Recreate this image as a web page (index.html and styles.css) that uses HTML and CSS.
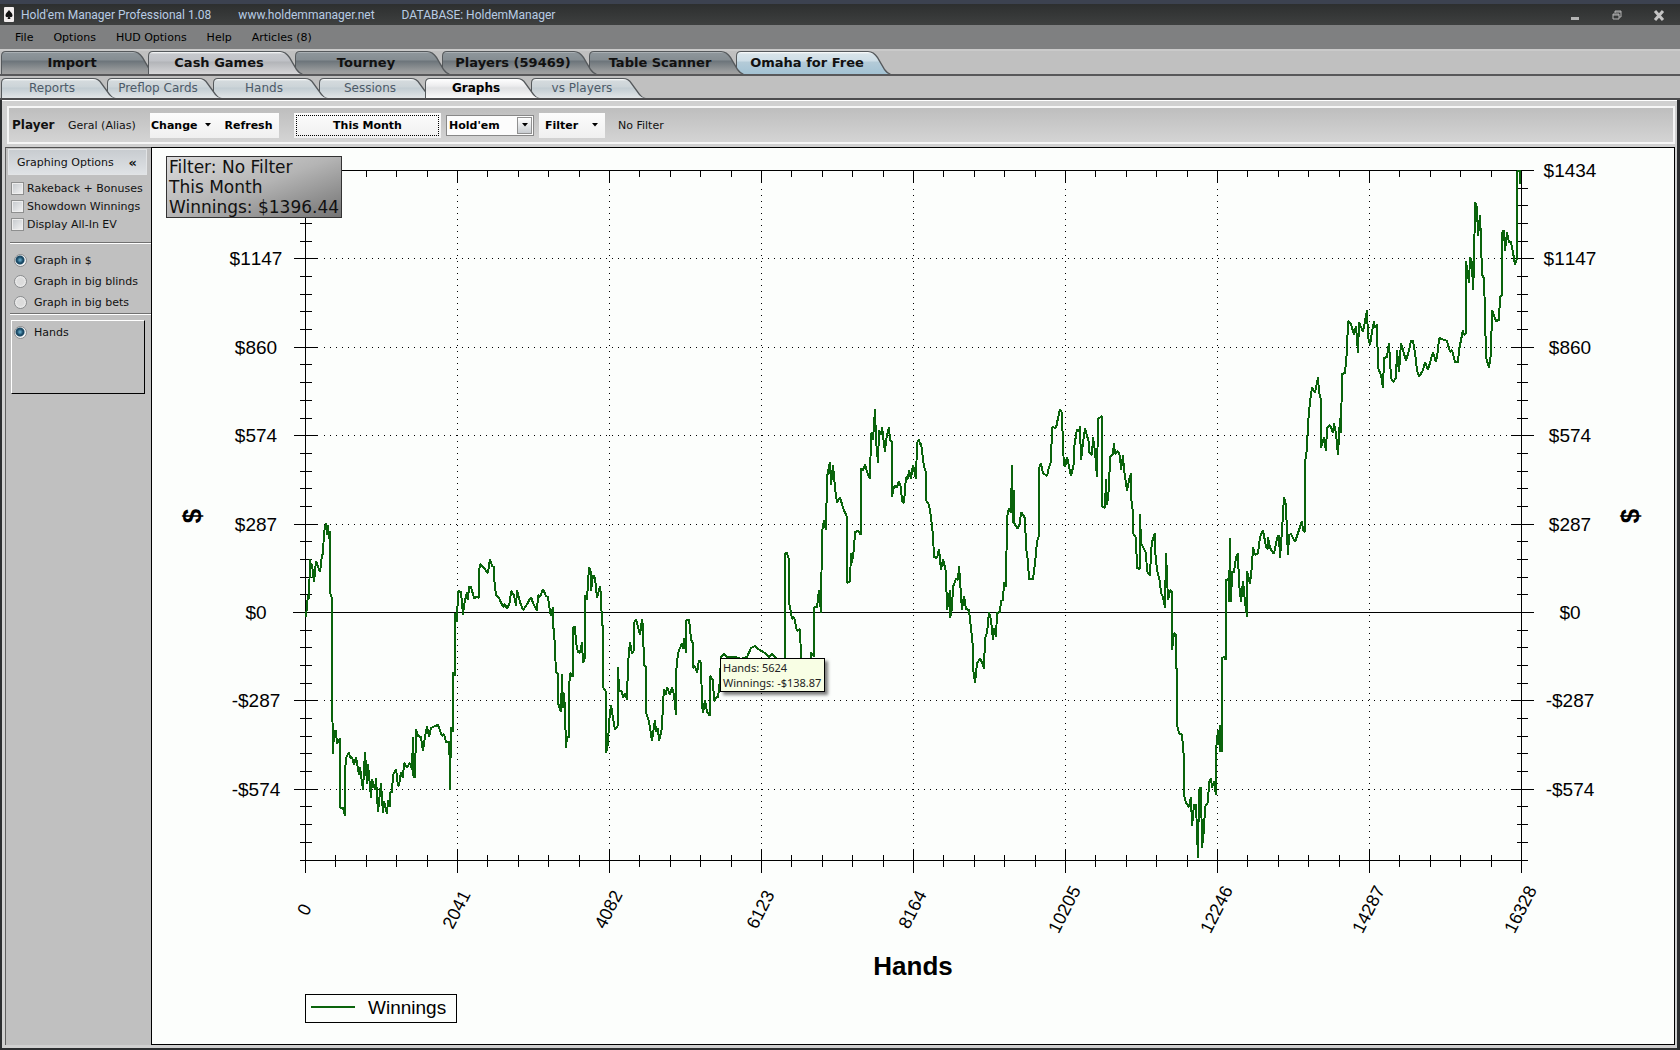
FILE: index.html
```html
<!DOCTYPE html>
<html lang="en">
<head>
    <meta charset="UTF-8">
    <meta name="viewport" content="width=device-width, initial-scale=1.0">
    <title>Hold'em Manager Professional 1.08</title>
    <link rel="stylesheet" href="styles.css">
</head>
<body>
    <header class="title-bar">
        <svg class="app-icon" viewBox="0 0 10 15" aria-hidden="true">
            <rect width="10" height="15" rx="1" fill="#f2eeee"/>
            <path d="M5 3 C4 5 1.500 6 1.500 8.500 C1.500 10.500 4 10.500 4.500 9.500 L3.500 12 H6.500 L5.500 9.500 C6 10.500 8.500 10.500 8.500 8.500 C8.500 6 6 5 5 3Z" fill="#111"/>
        </svg>
        <span class="title-text">Hold'em Manager Professional 1.08</span>
        <span class="title-text">www.holdemmanager.net</span>
        <span class="title-text">DATABASE: HoldemManager</span>
        <div class="window-buttons">
            <button aria-label="Minimize"><svg viewBox="0 0 12 12"><rect x="2" y="8" width="8" height="3" fill="#b4b4b4"/></svg></button>
            <button aria-label="Restore"><svg viewBox="0 0 12 12"><path d="M4 4 V2 H10 V8 H8 M2 5 H8 V10 H2 Z M2 6 H8 M4 3 H10" fill="none" stroke="#b4b4b4"/></svg></button>
            <button aria-label="Close"><svg viewBox="0 0 12 12"><path d="M2 2 L10 11 M10 2 L2 11" stroke="#c4c4c4" stroke-width="3"/></svg></button>
        </div>
    </header>

    <nav class="menu-bar">
        <button>File</button>
        <button>Options</button>
        <button>HUD Options</button>
        <button>Help</button>
        <button>Articles (8)</button>
    </nav>

    <nav class="tabs main-tabs">
        <button class="tab">Import</button>
        <button class="tab active">Cash Games</button>
        <button class="tab">Tourney</button>
        <button class="tab">Players (59469)</button>
        <button class="tab">Table Scanner</button>
        <button class="tab promo">Omaha for Free</button>
    </nav>

    <nav class="tabs sub-tabs">
        <button class="tab">Reports</button>
        <button class="tab">Preflop Cards</button>
        <button class="tab">Hands</button>
        <button class="tab">Sessions</button>
        <button class="tab active">Graphs</button>
        <button class="tab">vs Players</button>
    </nav>

    <main class="page">
        <div class="toolbar">
            <span class="player-label">Player</span>
            <span class="player-name">Geral (Alias)</span>
            <button class="tool-button change">Change <svg class="caret" viewBox="0 0 6 4"><path d="M0 0 H6 L3 3.500 Z"/></svg></button>
            <button class="tool-button refresh">Refresh</button>
            <button class="tool-button month">This Month</button>
            <div class="game-select">
                <select aria-label="Game">
                    <option>Hold'em</option>
                    <option>Omaha</option>
                </select>
                <span class="select-arrow"><svg class="caret" viewBox="0 0 6 4"><path d="M0 0 H6 L3 3.500 Z"/></svg></span>
            </div>
            <button class="tool-button filter">Filter <svg class="caret" viewBox="0 0 6 4"><path d="M0 0 H6 L3 3.500 Z"/></svg></button>
            <span class="filter-name">No Filter</span>
        </div>

        <div class="content">
            <aside class="sidebar">
                <button class="sidebar-header"><span>Graphing Options</span><span class="collapse">«</span></button>
                <div class="checks">
                    <label><input type="checkbox">Rakeback + Bonuses</label>
                    <label><input type="checkbox">Showdown Winnings</label>
                    <label><input type="checkbox">Display All-In EV</label>
                </div>
                <div class="radios">
                    <label><input type="radio" name="unit" checked>Graph in $</label>
                    <label><input type="radio" name="unit">Graph in big blinds</label>
                    <label><input type="radio" name="unit">Graph in big bets</label>
                </div>
                <div class="axis-box">
                    <label><input type="radio" name="axis" checked>Hands</label>
                </div>
            </aside>

            <section class="chart-panel">
                <svg class="chart" viewBox="152 148 1522 896" preserveAspectRatio="xMinYMin meet">
                    <g id="grid" class="grid"></g>
                    <g id="ticks" class="ticks"></g>
                    <rect class="frame" x="305.5" y="170.5" width="1216" height="690"/>
                    <line class="frame" x1="293" y1="612.5" x2="1534" y2="612.5"/>
                    <polyline id="winnings" class="series"/>
                    <g id="labels" class="labels"></g>
                    <text class="axis-title" transform="translate(201 516) rotate(-90)">$</text>
                    <text class="axis-title" transform="translate(1639 516) rotate(-90)">$</text>
                    <text class="axis-title" x="913" y="975">Hands</text>
                    <rect class="frame" x="305.5" y="994.5" width="151" height="28"/>
                    <line class="series" x1="311" y1="1007" x2="355" y2="1007"/>
                    <text class="legend" x="368" y="1014">Winnings</text>
                </svg>
                <div class="summary">
                    <div>Filter: No Filter</div>
                    <div>This Month</div>
                    <div>Winnings: $1396.44</div>
                </div>
                <div class="tooltip">
                    <div>Hands: 5624</div>
                    <div>Winnings: -$138.87</div>
                </div>
            </section>
        </div>
    </main>

    <script src="chart.js"></script>
</body>
</html>
```
FILE: styles.css
```css
:root {
    --ui-font: Verdana, 'DejaVu Sans', sans-serif;
    --title-font: Roboto, 'Noto Sans', sans-serif;
    --chart-font: 'Liberation Sans', Arial, sans-serif;
    --panel: #c0c0c0;
    --paper: #fcfefc;
    --line-green: #0a640c;
}

* {
    box-sizing: border-box;
}

body {
    margin: 0;
    height: 100vh;
    display: flex;
    flex-direction: column;
    font-family: var(--ui-font);
    font-size: 11px;
    color: #111;
    background-color: #2c2e30;
    overflow: hidden;
}

button {
    font: inherit;
    color: inherit;
    border: none;
    background: none;
    padding: 0;
    white-space: nowrap;
}

/* Title bar */
.title-bar {
    flex: none;
    height: 25px;
    padding: 0 15px 0 4px;
    border-top: 4px solid #3c4250;
    display: flex;
    align-items: center;
    background: linear-gradient(#2d2f2f, #3e4040);
    font-family: var(--title-font);
    font-size: 12px;
    color: #b8cce4;
}

.app-icon {
    width: 10px;
    height: 15px;
    margin-right: 7px;
}

.title-text {
    margin-right: 27px;
}

.window-buttons {
    margin-left: auto;
    display: flex;
    gap: 30px;
}

.window-buttons button {
    width: 12px;
    height: 12px;
}

.window-buttons svg {
    display: block;
}

/* Menu */
.menu-bar {
    flex: none;
    height: 24px;
    padding: 0 15px;
    display: flex;
    align-items: center;
    gap: 20px;
    background-color: #7f8081;
    color: #000;
}

/* Tabs */
.tabs {
    flex: none;
    display: flex;
    align-items: flex-end;
    padding-left: 1px;
    background-color: var(--panel);
    border-bottom: 2px solid #58585a;
    position: relative;
    z-index: 0;
}

.tab {
    position: relative;
    z-index: 1;
}

.tab:nth-child(1) { z-index: 6; }
.tab:nth-child(2) { z-index: 5; }
.tab:nth-child(3) { z-index: 4; }
.tab:nth-child(4) { z-index: 3; }
.tab:nth-child(5) { z-index: 2; }
.tabs .tab.active { z-index: 7; }

.tab::before,
.tab::after {
    content: '';
    position: absolute;
    z-index: -1;
    top: 0;
    left: 0;
    bottom: 0;
    right: -12px;
    background: #55595c;
}

.main-tabs {
    height: 27px;
    border-top: 2px solid #cacaca;
}

.main-tabs .tab {
    width: 147px;
    height: 23px;
    padding-right: 5px;
    font-size: 13px;
    font-weight: bold;
}

.main-tabs .tab::before {
    clip-path: path('M0 23 V5 Q0 0 5 0 H132 Q138 0 142 6 L149 18 Q152 22 155 23 Z');
}

.main-tabs .tab::after {
    clip-path: path('M1 23 V5 Q1 1 5 1 H132 Q137 1 141 7 L148 19 Q151 23 153 23 Z');
    background: linear-gradient(#c5c9cc 1px, #8e969b 2px, #858d92 9px, #6c747a 10px, #999b9c 20px, #a0a0a0);
}

.main-tabs .tab.active::after {
    background: linear-gradient(#fff 1px, #c6c8cc 3px, #bfc1c6 10px, #b2b4b8 11px, #d6d6d8);
}

.main-tabs .tab.promo::after {
    background: linear-gradient(#fff 1px, #d8e4ea 3px, #cddde6 10px, #b4cbd8 11px, #a3c2d3);
}

.sub-tabs {
    height: 24px;
    border-bottom-color: #4c4c4e;
}

.sub-tabs .tab {
    width: 106px;
    height: 20px;
    padding-right: 4px;
    font-size: 12px;
    color: #4c5a68;
}

.sub-tabs .tab::before {
    clip-path: path('M0 20 V5 Q0 0 5 0 H92 Q98 0 101 5 L109 16 Q112 20 115 20 Z');
}

.sub-tabs .tab::after {
    clip-path: path('M1 20 V5 Q1 1 5 1 H92 Q97 1 100 6 L108 17 Q111 20 113 20 Z');
    background: linear-gradient(#fff 1px, #d4dadd 3px, #ccd4d8 9px, #c2ccd2 10px, #e2e5e7);
}

.sub-tabs .tab.active {
    color: #000;
    font-weight: bold;
}

.sub-tabs .tab.active::after {
    background: linear-gradient(#fff 1px, #ececee 8px, #dfe0e2 10px, #fafafa);
}

/* Page */
.page {
    flex: 1;
    min-height: 0;
    margin: 0 3px 2px 2px;
    padding: 5px 2px 3px 3px;
    border-top: 1px solid #fff;
    background-color: #d0d0d0;
    display: flex;
    flex-direction: column;
}

.toolbar {
    flex: none;
    height: 38px;
    margin: 0 0 3px 2px;
    padding-left: 3px;
    border: 2px solid #f6f6f6;
    background: linear-gradient(#bebebe, #d4d4d4);
    display: flex;
    align-items: center;
}

.player-label {
    width: 56px;
    font-size: 12px;
    font-weight: bold;
}

.player-name {
    width: 82px;
}

.tool-button {
    height: 25px;
    background: linear-gradient(#fcfcfc, #f0f0f0);
    color: #000;
    font-weight: bold;
}

.caret {
    width: 6px;
    height: 4px;
    fill: #000;
}

.change,
.filter {
    display: flex;
    align-items: center;
    justify-content: space-between;
    padding: 0 7px 0 1px;
}

.change {
    width: 68px;
}

.refresh {
    width: 61px;
    margin-right: 15px;
}

.month {
    width: 147px;
    padding: 2px;
    outline: 1px dotted #000;
    outline-offset: -3px;
    margin-right: 5px;
}

.game-select {
    position: relative;
    width: 88px;
    height: 21px;
    margin-right: 5px;
}

.game-select select {
    appearance: none;
    width: 100%;
    height: 100%;
    padding: 0 0 0 2px;
    border: 1px solid #888;
    border-radius: 0;
    background-color: #fcfcfc;
    font: bold 11px var(--ui-font);
    color: #000;
}

.select-arrow {
    position: absolute;
    top: 2px;
    right: 2px;
    bottom: 2px;
    width: 15px;
    display: flex;
    align-items: center;
    justify-content: center;
    border: 1px solid #909090;
    background: linear-gradient(#fff, #c8ccd0);
    pointer-events: none;
}

.filter {
    width: 66px;
    padding-left: 6px;
    margin-right: 13px;
}

.content {
    flex: 1;
    min-height: 0;
    display: flex;
}

/* Sidebar */
.sidebar {
    flex: none;
    width: 146px;
    padding: 1px 0 0 2px;
    border-top: 1px solid #505050;
    border-left: 1px solid #606060;
    background-color: var(--panel);
    display: flex;
    flex-direction: column;
    white-space: nowrap;
}

.sidebar label {
    display: flex;
    align-items: center;
}

.sidebar-header {
    height: 26px;
    margin-right: 4px;
    padding: 0 9px 0 8px;
    border: 1px solid #e2e4e6;
    display: flex;
    align-items: center;
    justify-content: space-between;
    background: linear-gradient(#c8ccd0, #dfe2e5);
}

.collapse {
    font-size: 13px;
    font-weight: bold;
}

.checks {
    padding: 4px 0 9px 3px;
    margin-left: 2px;
    margin-bottom: 1px;
    border-bottom: 1px solid #707070;
    box-shadow: 0 1px #fff;
}

.checks label {
    height: 18px;
    gap: 3px;
    margin-left: -2px;
}

.checks input {
    appearance: none;
    flex: none;
    width: 13px;
    height: 13px;
    margin: 0;
    border: 1px solid #8e8f8f;
    background: linear-gradient(135deg, #c4c8cc, #f4f4f4);
    box-shadow: inset 0 0 0 1px #eee;
}

.radios {
    margin-left: 2px;
    padding: 6px 0 0 4px;
    border-bottom: 1px solid #707070;
    box-shadow: 0 1px #fff;
}

.radios label {
    height: 21px;
    gap: 7px;
}

.sidebar input[type="radio"] {
    appearance: none;
    flex: none;
    width: 13px;
    height: 13px;
    margin: 0;
    border: 1px solid #8a8c8e;
    border-radius: 50%;
    background: radial-gradient(#dcdcdc 40%, #fff);
}

.sidebar input[type="radio"]:checked {
    background: radial-gradient(circle at 5px 5px, #6fb8d8 0, #1b4a66 3px, #1b4a66 4px, #f4f4f4 5px);
}

.axis-box {
    margin: 6px 6px 0 3px;
    height: 74px;
    padding: 1px 2px;
    border: 1px solid #fff;
    border-right-color: #000;
    border-bottom-color: #000;
}

.axis-box label {
    height: 21px;
    gap: 7px;
}

/* Chart */
.chart-panel {
    flex: 1;
    min-width: 0;
    position: relative;
    border: 1px solid #000;
    background-color: var(--paper);
}

.chart {
    display: block;
    width: 100%;
    height: 100%;
    font-family: var(--chart-font);
    font-size: 19px;
    font-kerning: none;
}

.frame,
.ticks line {
    fill: none;
    stroke: #000;
    shape-rendering: crispEdges;
}

.grid line {
    stroke: #000;
    stroke-dasharray: 1 5;
    shape-rendering: crispEdges;
}

.series {
    fill: none;
    stroke: var(--line-green);
    stroke-width: 2;
    stroke-linejoin: bevel;
    shape-rendering: crispEdges;
}

.labels text {
    text-anchor: middle;
}

.labels .x-label {
    font-size: 18px;
}

.axis-title {
    font-size: 26px;
    font-weight: bold;
    text-anchor: middle;
}

.summary {
    position: absolute;
    top: 8px;
    left: 14px;
    padding: 0 2px;
    border: 1px solid #333;
    background: linear-gradient(160deg, #dcdcdc, #b4b4b4 50%, #747474);
    font-size: 17px;
    line-height: 20px;
}

.tooltip {
    position: absolute;
    top: 510px;
    left: 568px;
    padding: 1px 3px 1px 2px;
    border: 1px solid #000;
    background-color: #f8fee4;
    box-shadow: 3px 3px 3px rgba(0, 0, 0, 0.5);
    font-family: Tahoma, 'Noto Sans', sans-serif;
    font-size: 11px;
    line-height: 15px;
    color: #222;
    white-space: nowrap;
}
```
FILE: chart.js
```js
const SVG_NS = 'http://www.w3.org/2000/svg';

// plot area
const left = 305.5;
const right = 1521.5;
const top_ = 170.5;
const bottom = 860.5;
const stepX = 152;
const stepY = 88.4;

const grid = document.getElementById('grid');
const ticks = document.getElementById('ticks');
const labels = document.getElementById('labels');

const yLabels = ['$1434', '$1147', '$860', '$574', '$287', '$0', '-$287', '-$574'];

function addLine(parent, x1, y1, x2, y2) {
    const line = document.createElementNS(SVG_NS, 'line');
    line.setAttribute('x1', x1);
    line.setAttribute('y1', y1);
    line.setAttribute('x2', x2);
    line.setAttribute('y2', y2);
    parent.appendChild(line);
}

function addText(text, x, y, className, angle) {
    const el = document.createElementNS(SVG_NS, 'text');
    el.setAttribute('transform', `translate(${x} ${y}) rotate(${angle})`);
    el.setAttribute('class', className);
    // drop the baseline so the text is centred on the point
    el.setAttribute('y', 6);
    el.textContent = text;
    labels.appendChild(el);
}

// vertical axes
for (let i = 0; i < 40; i++) {
    const y = Math.floor(top_ + i * stepY / 5) + 0.5;
    const major = i % 5 === 0;
    const size = major ? 12 : 6;
    addLine(ticks, left - size, y, left + size, y);
    addLine(ticks, right - size + 1, y, right + size, y);
    if (major) {
        addLine(grid, left + 18, y, right - 12, y);
        if (i > 0) {
            addText(yLabels[i / 5], 256, y, 'y-label', 0);
        }
        addText(yLabels[i / 5], 1570, y, 'y-label', 0);
    }
}

// horizontal axes
for (let i = 0; i <= 40; i++) {
    const x = Math.round(left + i * stepX / 5 - 0.5) + 0.5;
    const major = i % 5 === 0;
    const size = major ? 12 : 6;
    addLine(ticks, x, top_, x, top_ + size);
    addLine(ticks, x, bottom - size, x, bottom + size);
    if (major) {
        addLine(grid, x, top_ + 18, x, bottom - 12);
        addText(String(i / 5 * 2041), x - 1, 909.5, 'x-label', -63);
    }
}

addLine(ticks, left - 6, bottom, left, bottom);
addLine(ticks, right, bottom, right + 6, bottom);

const points = [
    '306,617 307,605 308,595 309,599 310,559 311,567 312,564 314,582 316,561 318,567 320,572 322,555 323,554',
    '324,532 326,523 327,535 328,525 329,539 330,531 330,593 332,598 332,688 333,754 334,731 336,731 337,744',
    '340,738 340,808 343,808 345,816 345,773 346,758 349,752 350,758 352,757 354,765 356,757 359,775 360,767',
    '363,790 365,752 367,784 368,764 371,798 372,779 375,790 376,778 378,812 381,783 383,813 384,801 387,814',
    '388,800 390,807 390,792 392,792 393,775 396,769 398,786 399,785 401,772 403,778 404,763 407,767 410,763',
    '412,770 413,737 413,775 415,778 416,729 418,736 421,737 423,751 425,737 427,726 429,737 431,728 435,726',
    '438,725 442,736 444,734 446,742 449,742 450,767 450,790 451,727 453,732 453,672 455,676 455,613 457,622',
    '458,591 461,592 463,615 464,605 467,592 468,600 469,587 471,587 474,598 477,597 479,598 479,572 480,564',
    '483,567 488,573 490,559 492,566 494,567 494,578 496,595 499,598 503,607 505,604 507,609 510,602 511,591',
    '514,595 516,606 517,590 520,602 523,610 526,606 531,597 533,603 537,611 538,595 540,597 543,589 546,596',
    '548,597 550,611 551,616 553,607 553,628 554,629 556,672 558,674 558,703 561,712 562,674 563,708 564,693',
    '565,710 566,748 567,737 569,737 569,690 570,673 573,677 573,627 575,627 576,642 578,652 580,653 582,642',
    '583,663 585,657 585,595 587,600 589,567 591,572 591,591 593,575 595,578 597,598 600,586 601,595 602,625',
    '603,626 603,687 606,692 606,753 608,743 609,723 611,705 613,718 615,730 618,725 618,667 619,690 622,692',
    '623,698 625,693 627,700 628,663 630,642 632,654 634,650 634,623 636,619 638,627 640,635 642,619 643,627',
    '644,665 646,667 646,713 648,718 650,727 652,741 655,720 656,732 658,728 659,741 662,728 663,703 664,689',
    '666,695 667,687 670,695 672,687 674,695 676,715 676,673 678,653 682,643 683,649 684,638 686,653 686,620',
    '689,620 690,627 691,640 693,643 693,668 695,666 697,673 699,660 701,663 702,704 703,713 705,700 707,712',
    '710,716 710,676 713,680 714,701 717,697 718,697 720,680 721,657 724,654 727,657 735,657 741,659 747,657',
    '751,648 755,646 758,649 765,653 769,657 772,654 777,659 785,660 785,553 787,553 789,560 789,603 791,612',
    '792,619 794,617 797,631 800,629 801,657 804,665 811,665 811,652 814,657 814,607 817,607 819,590 821,613',
    '822,532 824,520 826,530 827,477 830,462 831,485 833,465 835,488 837,503 840,497 843,508 847,517 847,583',
    '850,581 851,553 852,563 854,548 855,532 858,531 861,535 861,468 863,471 865,464 867,472 870,479 871,435',
    '872,432 873,440 875,409 876,440 878,463 879,430 881,435 882,427 885,452 886,440 889,427 890,440 892,442',
    '892,497 894,486 897,487 899,481 901,488 902,501 904,503 906,477 908,479 909,470 911,479 913,465 916,479',
    '917,443 919,439 920,445 921,443 924,467 926,472 926,500 929,505 931,517 933,535 934,557 937,558 939,549',
    '941,570 943,559 946,572 947,610 950,590 950,618 952,608 953,587 956,579 958,580 959,566 960,580 962,610',
    '964,596 966,609 969,610 971,628 973,648 973,668 975,683 977,663 980,659 982,662 984,669 985,638 987,633',
    '989,612 991,620 993,640 994,628 996,637 997,613 1000,612 1001,601 1003,600 1004,582 1006,587 1007,517',
    '1009,508 1011,513 1012,465 1013,523 1014,490 1014,523 1018,529 1020,522 1021,512 1025,518 1026,547',
    '1028,562 1029,579 1033,579 1035,563 1037,542 1039,535 1039,468 1041,463 1043,473 1047,476 1049,467',
    '1051,462 1052,427 1056,428 1058,418 1060,409 1062,413 1063,447 1064,465 1065,467 1067,457 1071,476',
    '1074,463 1074,448 1077,429 1079,432 1080,426 1081,460 1083,443 1085,428 1089,443 1089,452 1092,455',
    '1093,437 1095,452 1097,477 1098,419 1102,416 1102,506 1105,508 1106,479 1107,505 1109,488 1110,457',
    '1113,454 1114,443 1115,454 1118,451 1120,456 1121,470 1123,455 1124,470 1126,483 1127,491 1129,480',
    '1131,473 1131,497 1133,513 1133,533 1136,538 1137,568 1140,569 1140,514 1141,543 1146,553 1147,571',
    '1150,576 1151,553 1152,542 1155,533 1155,550 1157,570 1160,582 1161,593 1163,597 1165,608 1166,553',
    '1168,600 1170,590 1172,592 1172,650 1174,633 1176,635 1176,667 1177,670 1177,725 1179,733 1182,735',
    '1183,747 1184,758 1184,795 1186,803 1189,807 1191,797 1192,826 1194,805 1196,805 1198,858 1199,790',
    '1201,787 1202,848 1204,830 1205,807 1208,802 1209,782 1211,778 1212,788 1214,781 1216,795 1216,750',
    '1218,730 1219,738 1220,752 1220,725 1222,752 1222,658 1224,657 1226,660 1226,580 1229,579 1229,602',
    '1230,538 1231,602 1232,572 1234,572 1236,557 1238,553 1239,583 1241,602 1243,581 1245,602 1247,617',
    '1247,571 1250,584 1252,565 1253,547 1255,555 1258,553 1260,537 1263,530 1266,547 1268,549 1268,537',
    '1270,548 1274,554 1277,538 1279,535 1280,558 1282,530 1284,497 1286,505 1287,535 1288,555 1289,535',
    '1291,534 1295,542 1298,533 1302,521 1303,530 1305,532 1305,463 1307,448 1308,423 1310,402 1312,387',
    '1315,393 1318,377 1319,392 1321,400 1321,448 1324,437 1326,451 1327,428 1330,425 1333,433 1334,423',
    '1336,433 1338,455 1340,418 1341,433 1342,374 1345,373 1347,350 1348,321 1351,324 1354,335 1356,326',
    '1358,353 1359,322 1363,332 1367,310 1368,337 1370,345 1372,332 1374,321 1375,328 1377,324 1378,368',
    '1381,375 1383,388 1384,358 1387,357 1389,343 1391,378 1393,382 1396,378 1397,350 1399,372 1401,343',
    '1403,350 1406,361 1409,350 1411,341 1413,341 1415,353 1417,370 1419,377 1423,370 1425,362 1428,370',
    '1433,352 1436,362 1438,350 1439,338 1447,341 1450,352 1452,350 1455,362 1458,362 1459,350 1463,330',
    '1464,335 1466,333 1466,261 1469,283 1470,257 1472,263 1473,290 1474,267 1475,202 1477,207 1478,236',
    '1480,215 1481,240 1482,275 1484,278 1485,313 1486,357 1489,368 1491,353 1492,310 1496,321 1499,320',
    '1500,297 1502,295 1502,233 1504,230 1505,251 1507,232 1509,242 1511,242 1513,252 1515,265 1517,258',
    '1517,171 1520,171 1520,184'
];

document.getElementById('winnings').setAttribute('points', points.join(' '));
```
